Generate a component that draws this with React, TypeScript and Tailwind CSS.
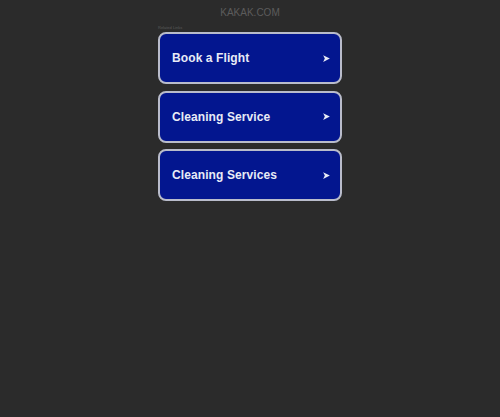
const links = ['Book a Flight', 'Cleaning Service', 'Cleaning Services']

export default function App() {
  return (
    <div className="min-h-[417px] w-full bg-[#2b2b2b] font-['Liberation_Sans',Arial,sans-serif]">
      <div className="mx-auto flex w-[184px] flex-col pt-[7px]">
        <div className="text-center text-[10px] leading-[12px] text-[#5c5c5c]">KAKAK.COM</div>
        <div className="mt-[6px] text-[4px] leading-[5px] text-[#5a5a5a]">Related Links</div>
        <div className="mt-[2px] flex flex-col gap-[6.5px]">
          {links.map((label) => (
            <a
              key={label}
              href="#"
              className="flex h-[52px] items-center justify-between rounded-[8px] border-2 border-[#b9bccb] bg-[#03168f] pl-[12px] pr-[9px] text-white"
            >
              <span className="text-[12px] font-semibold tracking-[0.1px] text-[#e8ebf6]">{label}</span>
              <svg width="9" height="9" viewBox="0 0 8 8" className="text-[#e8ebf6]">
                <path d="M1 1 L7 4 L1 7 L2.5 4 Z" fill="currentColor" />
              </svg>
            </a>
          ))}
        </div>
      </div>
    </div>
  )
}
